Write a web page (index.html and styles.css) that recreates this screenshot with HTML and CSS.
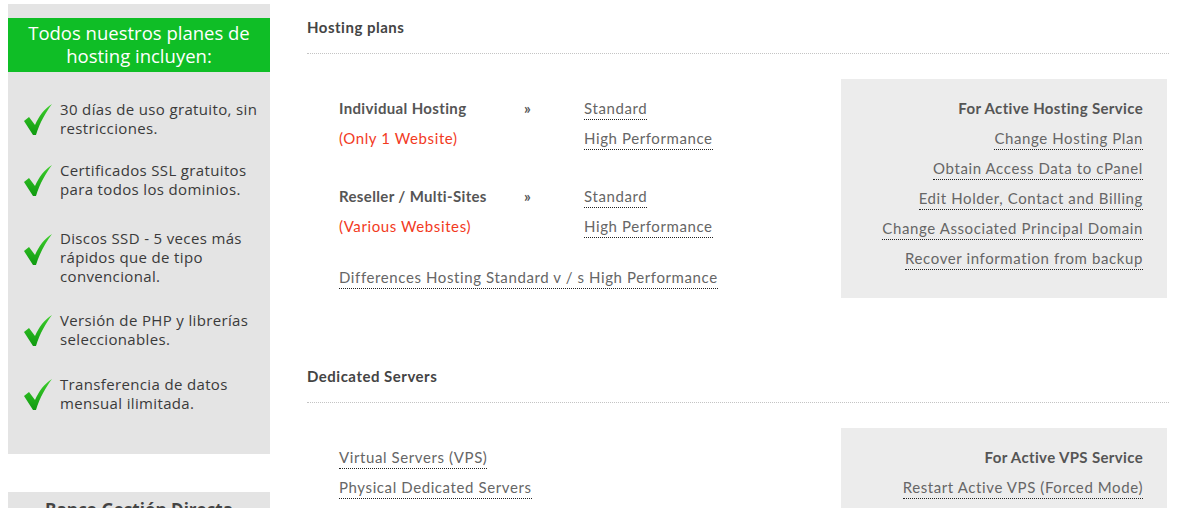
FILE: index.html
```html
<!DOCTYPE html>
<html lang="es">
<head>
<meta charset="utf-8">
<title>Hosting</title>
<link rel="stylesheet" href="styles.css">
</head>
<body>
<div class="page">
  <aside class="sidebar">
    <div class="promo">
      <div class="promo-head">Todos nuestros planes de hosting incluyen:</div>
      <ul class="features">
        <li class="feature f1"><svg class="check" viewBox="0 0 28 31"><defs><linearGradient id="g1" x1="0" y1="0" x2="0" y2="1"><stop offset="0" stop-color="#3ecf2c"/><stop offset="1" stop-color="#0f9a10"/></linearGradient></defs><path d="M0 17 L5 13 L11 21 C15 12 20 5 28 0 C22 8 16 18 12 31 L9 31 Z" fill="url(#g1)"/></svg><span>30 días de uso gratuito, sin restricciones.</span></li>
        <li class="feature f2"><svg class="check" viewBox="0 0 28 31"><path d="M0 17 L5 13 L11 21 C15 12 20 5 28 0 C22 8 16 18 12 31 L9 31 Z" fill="url(#g1)"/></svg><span>Certificados SSL gratuitos para todos los dominios.</span></li>
        <li class="feature f3"><svg class="check" viewBox="0 0 28 31"><path d="M0 17 L5 13 L11 21 C15 12 20 5 28 0 C22 8 16 18 12 31 L9 31 Z" fill="url(#g1)"/></svg><span>Discos SSD - 5 veces más rápidos que de tipo convencional.</span></li>
        <li class="feature f4"><svg class="check" viewBox="0 0 28 31"><path d="M0 17 L5 13 L11 21 C15 12 20 5 28 0 C22 8 16 18 12 31 L9 31 Z" fill="url(#g1)"/></svg><span>Versión de PHP y librerías seleccionables.</span></li>
        <li class="feature f5"><svg class="check" viewBox="0 0 28 31"><path d="M0 17 L5 13 L11 21 C15 12 20 5 28 0 C22 8 16 18 12 31 L9 31 Z" fill="url(#g1)"/></svg><span>Transferencia de datos mensual ilimitada.</span></li>
      </ul>
    </div>
    <div class="promo promo2">
      <div class="promo2-head">Banco Gestión Directa</div>
    </div>
  </aside>

  <main class="main">
    <section class="block">
      <h2 class="block-title">Hosting plans</h2>
      <div class="block-body">
        <div class="plans">
          <div class="plan">
            <div class="plan-name">Individual Hosting</div>
            <div class="plan-arrow">»</div>
            <div><a class="link" href="#">Standard</a></div>
            <div class="plan-note">(Only 1 Website)</div>
            <div></div>
            <div><a class="link" href="#">High Performance</a></div>
          </div>
          <div class="plan plan-second">
            <div class="plan-name">Reseller / Multi-Sites</div>
            <div class="plan-arrow">»</div>
            <div><a class="link" href="#">Standard</a></div>
            <div class="plan-note">(Various Websites)</div>
            <div></div>
            <div><a class="link" href="#">High Performance</a></div>
          </div>
          <div class="plan-diff"><a class="link" href="#">Differences Hosting Standard v / s High Performance</a></div>
        </div>
        <div class="panel">
          <div class="panel-title">For Active Hosting Service</div>
          <div class="panel-row"><a class="link" href="#">Change Hosting Plan</a></div>
          <div class="panel-row"><a class="link" href="#">Obtain Access Data to cPanel</a></div>
          <div class="panel-row"><a class="link" href="#">Edit Holder, Contact and Billing</a></div>
          <div class="panel-row"><a class="link" href="#">Change Associated Principal Domain</a></div>
          <div class="panel-row"><a class="link" href="#">Recover information from backup</a></div>
        </div>
      </div>
    </section>

    <section class="block block-second">
      <h2 class="block-title">Dedicated Servers</h2>
      <div class="block-body">
        <div class="plans">
          <div class="plan-row"><a class="link" href="#">Virtual Servers (VPS)</a></div>
          <div class="plan-row"><a class="link" href="#">Physical Dedicated Servers</a></div>
        </div>
        <div class="panel">
          <div class="panel-title">For Active VPS Service</div>
          <div class="panel-row"><a class="link" href="#">Restart Active VPS (Forced Mode)</a></div>
        </div>
      </div>
    </section>
  </main>
</div>
</body>
</html>
```

FILE: styles.css
```css
* { box-sizing: border-box; }

html, body {
  margin: 0;
  padding: 0;
  background: #fff;
  overflow: hidden;
}

body {
  font-family: "Lato", "Liberation Sans", sans-serif;
  color: #555;
}

.page {
  display: flex;
  gap: 37px;
  padding: 4px 18px 0 8px;
  height: 508px;
}

/* ---------- Sidebar ---------- */
.sidebar {
  width: 262px;
  flex: none;
  display: flex;
  flex-direction: column;
  gap: 38px;
}

.promo {
  background: #e4e4e4;
  padding: 14px 0 39px;
  height: 450px;
  flex: none;
}

.promo-head {
  background: #0fbe26;
  color: #fff;
  font-family: "Open Sans", "Liberation Sans", sans-serif;
  font-size: 18.5px;
  line-height: 23px;
  text-align: center;
  padding: 3px 16px 5px;
  height: 54px;
}

.features {
  list-style: none;
  margin: 0;
  padding: 28px 0 0 16px;
}

.feature {
  display: flex;
  align-items: center;
  gap: 8px;
  font-family: "Open Sans", "Liberation Sans", sans-serif;
  font-size: 15px;
  line-height: 19px;
  color: #3a3a3a;
  letter-spacing: 0.35px;
}

.feature span { width: 206px; }

.check {
  width: 28px;
  height: 31px;
  flex: none;
}

.f2 { margin-top: 23px; }
.f3 { margin-top: 30px; align-items: flex-start; }
.f3 .check { margin-top: 5px; }
.f4 { margin-top: 25px; }
.f5 { margin-top: 26px; }

.promo2 {
  height: 60px;
  padding: 6px 20px;
}

.promo2-head {
  font-family: "Open Sans", "Liberation Sans", sans-serif;
  font-weight: 700;
  font-size: 17px;
  color: #444;
  text-align: center;
}

/* ---------- Main ---------- */
.main {
  flex: 1;
  min-width: 0;
}

.block-title {
  margin: 0;
  font-size: 15px;
  font-weight: 700;
  line-height: 20px;
  color: #444;
  letter-spacing: 0.5px;
  padding: 13px 0 16px;
  border-bottom: 1px dotted #c4c4c4;
}

.block-second { margin-top: 55px; }

.block-body {
  display: flex;
  justify-content: space-between;
  align-items: flex-start;
  padding: 25px 2px 0 32px;
}

.plans {
  padding-top: 14px;
  font-size: 15px;
  line-height: 30px;
}

.plan {
  display: grid;
  grid-template-columns: 185px 60px auto;
}

.plan-second { margin-top: 28px; }

.plan-name {
  font-weight: 700;
  color: #555;
  letter-spacing: 0.35px;
}

.plan-arrow {
  font-weight: 700;
  color: #555;
}

.plan-note {
  color: #f23a1e;
  letter-spacing: 0.6px;
}

.plan-diff {
  margin-top: 21px;
}

.link {
  color: #666;
  text-decoration: none;
  font-size: 15px;
  letter-spacing: 0.6px;
  padding-bottom: 2px;
  border-bottom: 1px dotted #222;
}

.panel {
  width: 326px;
  background: #ececec;
  padding: 14px 24px 25px;
  text-align: right;
  font-size: 15px;
  line-height: 30px;
}

.panel-title {
  font-weight: 700;
  color: #555;
  letter-spacing: 0.35px;
}
```
